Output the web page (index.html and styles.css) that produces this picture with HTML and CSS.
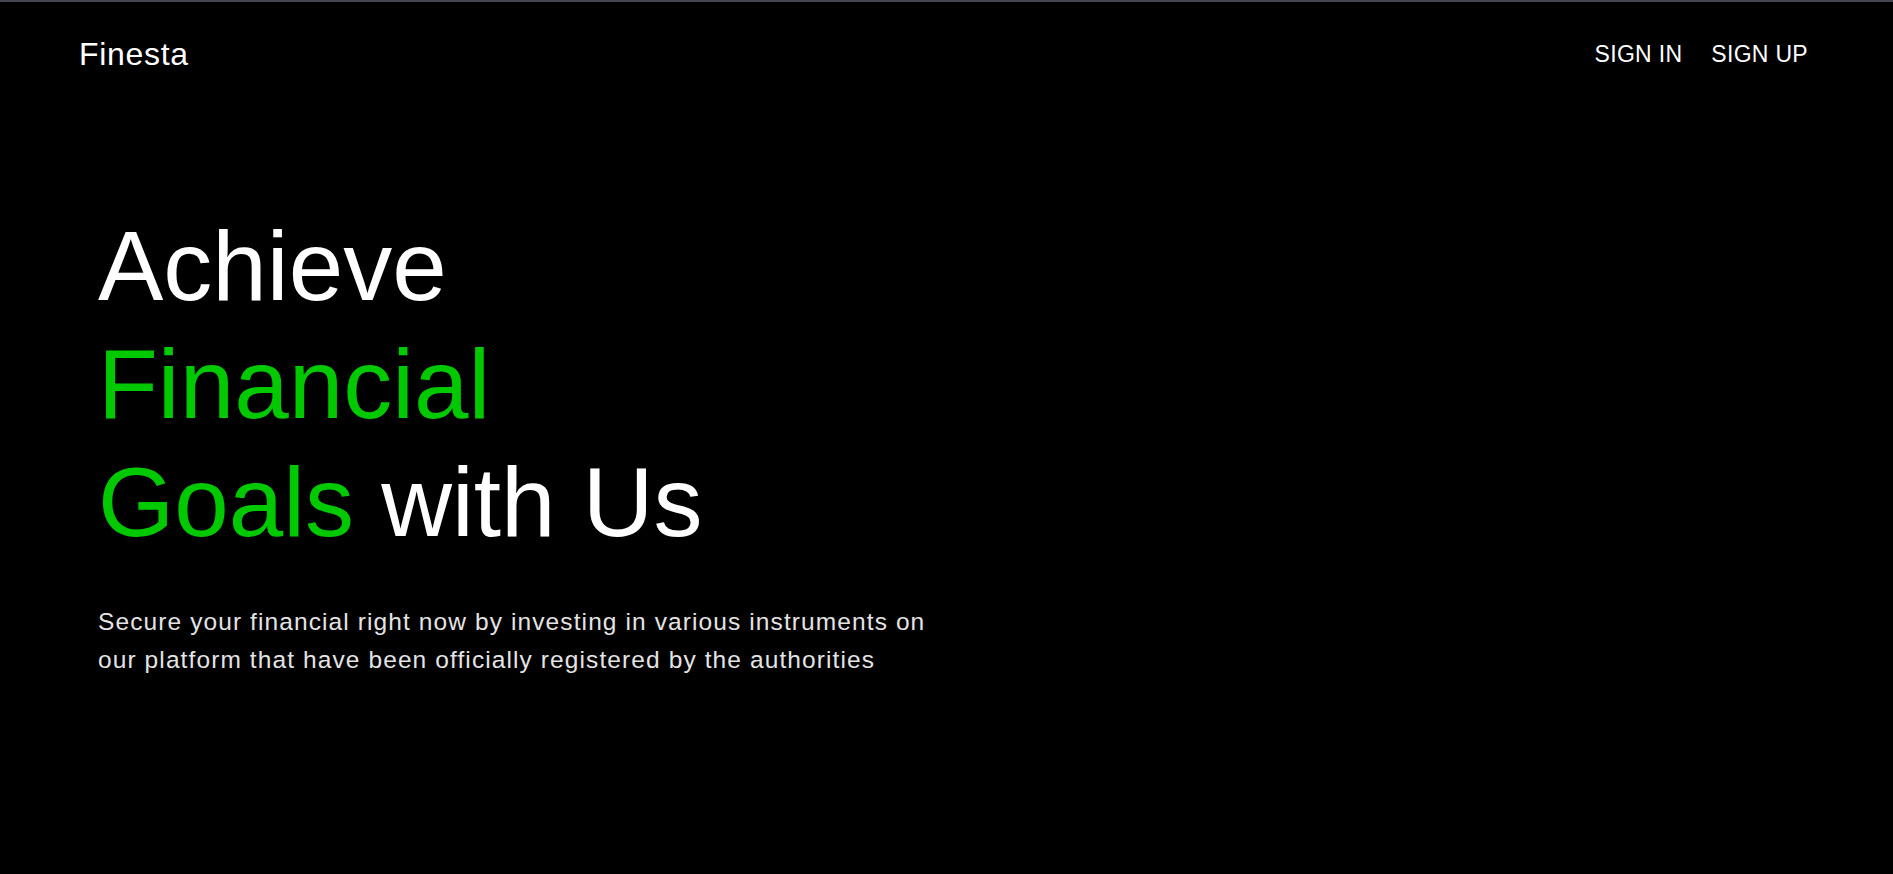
FILE: index.html
```html
<!DOCTYPE html>
<html lang="en">
<head>
<meta charset="utf-8">
<title>Finesta</title>
<link rel="stylesheet" href="styles.css">
</head>
<body>
<div class="page">
  <header class="topbar">
    <a class="logo" href="#">Finesta</a>
    <nav class="nav">
      <a class="nav-link" href="#">SIGN IN</a>
      <a class="nav-link" href="#">SIGN UP</a>
    </nav>
  </header>
  <main class="hero">
    <h1 class="hero-title">
      <span class="line">Achieve</span>
      <span class="line accent">Financial</span>
      <span class="line"><span class="accent">Goals</span> with Us</span>
    </h1>
    <p class="hero-text">Secure your financial right now by investing in various instruments on our platform that have been officially registered by the authorities</p>
  </main>
</div>
</body>
</html>
```

FILE: styles.css
```css
html, body {
  margin: 0;
  padding: 0;
  background: #000;
}
body {
  font-family: "Liberation Sans", Arial, sans-serif;
  color: #fff;
  height: 874px;
  overflow: hidden;
}
.page {
  border-top: 2px solid #44474f;
  min-height: 872px;
  box-sizing: border-box;
}
.topbar {
  display: flex;
  align-items: center;
  justify-content: space-between;
  padding: 32px 85px 0 79px;
  height: 40px;
}
.logo {
  color: #fff;
  text-decoration: none;
  font-size: 32px;
  letter-spacing: 0.7px;
}
.nav {
  display: flex;
  gap: 29px;
}
.nav-link {
  color: #fff;
  text-decoration: none;
  font-size: 23px;
  letter-spacing: 0.3px;
}
.hero {
  padding: 133px 0 0 98px;
}
.hero-title {
  margin: 0;
  font-weight: 400;
  font-size: 98px;
  line-height: 118px;
}
.line {
  display: block;
}
.accent {
  color: #00c900;
}
.hero-text {
  margin: 42px 0 0;
  width: 850px;
  font-size: 24.5px;
  letter-spacing: 1.1px;
  line-height: 37.7px;
  color: #e4e4e4;
}
```
